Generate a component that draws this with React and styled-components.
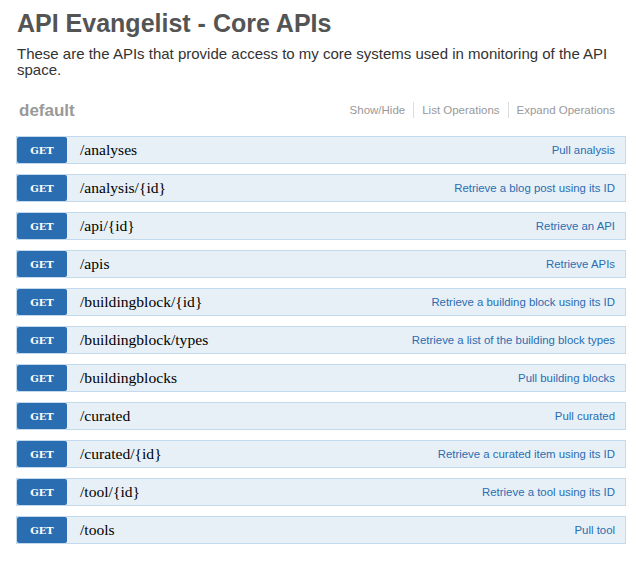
import React from 'react';
import styled, { createGlobalStyle } from 'styled-components';

const Global = createGlobalStyle`
  body {
    margin: 0;
    background: #fff;
    font-family: "Liberation Sans", Arial, sans-serif;
  }
`;

const Page = styled.div`
  padding: 8px 11px 16px 16px;
`;

const Title = styled.h1`
  margin: 0 0 0 1px;
  font-size: 25px;
  font-weight: bold;
  color: #545454;
  line-height: 30px;
`;

const Description = styled.p`
  margin: 8px 0 0 1px;
  font-size: 15px;
  line-height: 16px;
  color: #333;
`;

const Resource = styled.div`
  margin-top: 19px;
`;

const Heading = styled.div`
  display: flex;
  align-items: center;
  justify-content: space-between;
  padding: 0 11px 0 3px;
  height: 28px;
`;

const Name = styled.span`
  font-size: 17px;
  font-weight: bold;
  color: #999;
`;

const Options = styled.ul`
  display: flex;
  list-style: none;
  margin: -3px 0 0;
  padding: 0;
  font-size: 11.5px;
  color: #999;
`;

const Option = styled.li`
  padding: 0 8px;
  border-left: 1px solid #ddd;
  line-height: 16px;
  &:first-child {
    border-left: none;
  }
  &:last-child {
    padding-right: 0;
  }
`;

const List = styled.div`
  display: flex;
  flex-direction: column;
  gap: 10px;
  margin-top: 11px;
`;

const Row = styled.div`
  display: flex;
  align-items: stretch;
  height: 28px;
  box-sizing: border-box;
  background: #e7f0f7;
  border: 1px solid #c3d9ec;
`;

const Method = styled.span`
  width: 50px;
  flex-shrink: 0;
  display: flex;
  align-items: center;
  justify-content: center;
  background: #2a6db1;
  color: #fff;
  font-family: "DejaVu Serif", "Liberation Serif", serif;
  font-weight: bold;
  font-size: 10px;
  border-radius: 2px;
`;

const Path = styled.span`
  flex: 1;
  display: flex;
  align-items: center;
  padding-left: 13px;
  font-family: "Liberation Serif", "Times New Roman", serif;
  font-size: 15.6px;
  color: #000;
`;

const Summary = styled.span`
  display: flex;
  align-items: center;
  padding-right: 10px;
  font-size: 11.4px;
  color: #2a6db1;
`;

const endpoints = [
  ['/analyses', 'Pull analysis'],
  ['/analysis/{id}', 'Retrieve a blog post using its ID'],
  ['/api/{id}', 'Retrieve an API'],
  ['/apis', 'Retrieve APIs'],
  ['/buildingblock/{id}', 'Retrieve a building block using its ID'],
  ['/buildingblock/types', 'Retrieve a list of the building block types'],
  ['/buildingblocks', 'Pull building blocks'],
  ['/curated', 'Pull curated'],
  ['/curated/{id}', 'Retrieve a curated item using its ID'],
  ['/tool/{id}', 'Retrieve a tool using its ID'],
  ['/tools', 'Pull tool'],
];

export default function App() {
  return (
    <Page>
      <Global />
      <Title>API Evangelist - Core APIs</Title>
      <Description>
        These are the APIs that provide access to my core systems used in monitoring of the API space.
      </Description>
      <Resource>
        <Heading>
          <Name>default</Name>
          <Options>
            <Option>Show/Hide</Option>
            <Option>List Operations</Option>
            <Option>Expand Operations</Option>
          </Options>
        </Heading>
        <List>
          {endpoints.map(([path, summary]) => (
            <Row key={path}>
              <Method>GET</Method>
              <Path>{path}</Path>
              <Summary>{summary}</Summary>
            </Row>
          ))}
        </List>
      </Resource>
    </Page>
  );
}
